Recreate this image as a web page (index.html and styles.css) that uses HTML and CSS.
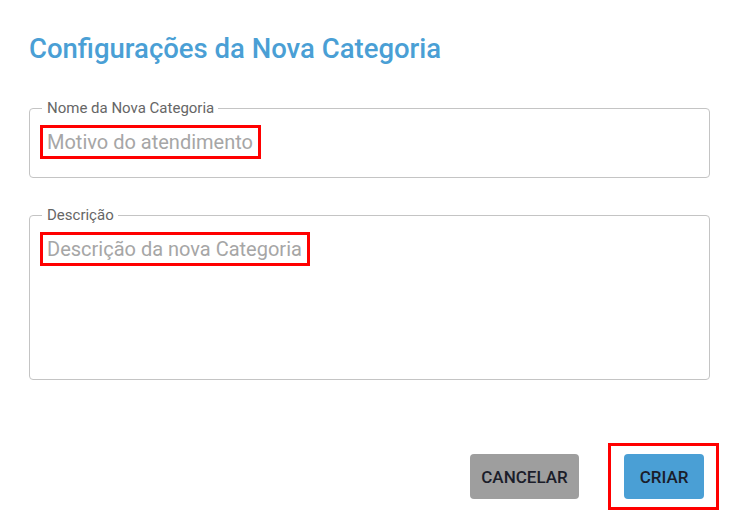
FILE: index.html
```html
<!DOCTYPE html>
<html>
<head>
  <meta charset="UTF-8">
  <meta name="viewport" content="width=device-width, initial-scale=1.0">
  <title>Nova Categoria</title>
  <link rel="stylesheet" href="styles.css">
</head>
<body>
  <div class="dialog">
    <h1 class="title">Configurações da Nova Categoria</h1>

    <fieldset class="field">
      <legend>Nome da Nova Categoria</legend>
      <div class="field-area">
        <span class="mark placeholder">Motivo do atendimento</span>
      </div>
    </fieldset>

    <fieldset class="field field-tall">
      <legend>Descrição</legend>
      <div class="field-area">
        <span class="mark placeholder">Descrição da nova Categoria</span>
      </div>
    </fieldset>
  </div>

  <div class="actions">
    <button class="btn btn-cancel">CANCELAR</button>
    <div class="mark mark-btn">
      <button class="btn btn-create">CRIAR</button>
    </div>
  </div>
</body>
</html>
```

FILE: styles.css
```css
body {
  margin: 0;
  padding: 0;
  background: #fff;
  font-family: Roboto, "Liberation Sans", sans-serif;
}
.dialog {
  padding: 32px 21px 0 29px;
}
.title {
  margin: 0 0 34px;
  font-size: 27.5px;
  font-weight: 500;
  line-height: normal;
  color: #4a9fd5;
}
.field {
  margin: 0 0 28px;
  padding: 8px 10px 18px;
  border: 1px solid #c4c4c4;
  border-radius: 4px;
}
.field legend {
  margin-left: 2px;
  padding: 0 4px 0 5px;
  font-size: 15px;
  line-height: normal;
  color: #666;
}
.field-tall .field-area {
  min-height: 129px;
}
.mark {
  display: inline-block;
  border: 3px solid #f00;
}
.placeholder {
  padding: 2px 5px 2px 4px;
  font-size: 20px;
  line-height: 24px;
  color: #a6a6a6;
}
.actions {
  display: flex;
  justify-content: flex-end;
  align-items: center;
  gap: 29px;
  padding: 35px 12px 0 0;
}
.mark-btn {
  padding: 8px 12px 8px 13px;
}
.btn {
  height: 45px;
  border: none;
  border-radius: 4px;
  font-family: Roboto, "Liberation Sans", sans-serif;
  font-size: 17px;
  font-weight: 500;
  color: #1b1d2a;
  cursor: pointer;
}
.btn-cancel {
  width: 109px;
  background: #9e9e9e;
}
.btn-create {
  display: block;
  width: 80px;
  background: #4a9fd5;
}
```
